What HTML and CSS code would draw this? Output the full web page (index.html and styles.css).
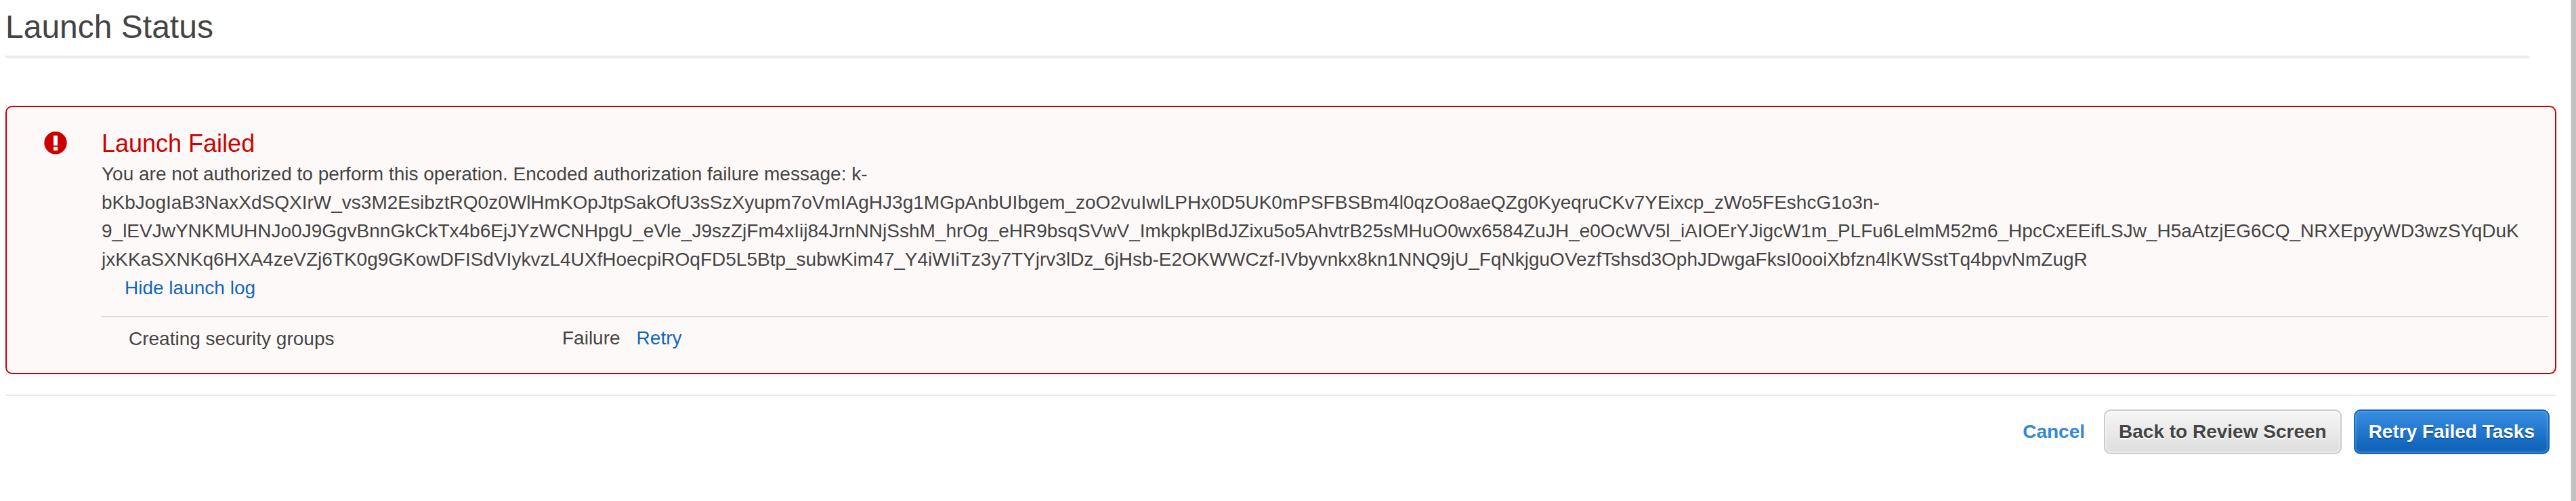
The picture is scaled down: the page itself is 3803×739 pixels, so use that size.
FILE: index.html
```html
<!DOCTYPE html>
<html lang="en">
<head>
<meta charset="utf-8">
<title>Launch Status</title>
<link rel="stylesheet" href="styles.css">
</head>
<body>
<main class="page">
  <h1 class="title">Launch Status</h1>
  <section class="alert">
    <svg class="alert-icon" viewBox="0 0 34 34"><circle cx="17" cy="16.7" r="16.7" fill="#c00"/><path d="M14 6h6v14.4h-6zM14 23h6v5h-6z" fill="#fff"/><path d="M14 21.4h6v.7h-6z" fill="#f09a9a"/></svg>
    <div class="alert-body">
      <h2 class="alert-title">Launch Failed</h2>
      <p class="message">You are not authorized to perform this operation. Encoded authorization failure message: k-<br>bKbJogIaB3NaxXdSQXIrW_vs3M2EsibztRQ0z0WlHmKOpJtpSakOfU3sSzXyupm7oVmIAgHJ3g1MGpAnbUIbgem_zoO2vuIwlLPHx0D5UK0mPSFBSBm4l0qzOo8aeQZg0KyeqruCKv7YEixcp_zWo5FEshcG1o3n-<br>9_lEVJwYNKMUHNJo0J9GgvBnnGkCkTx4b6EjJYzWCNHpgU_eVle_J9szZjFm4xIij84JrnNNjSshM_hrOg_eHR9bsqSVwV_ImkpkplBdJZixu5o5AhvtrB25sMHuO0wx6584ZuJH_e0OcWV5l_iAIOErYJigcW1m_PLFu6LelmM52m6_HpcCxEEifLSJw_H5aAtzjEG6CQ_NRXEpyyWD3wzSYqDuK<br>jxKKaSXNKq6HXA4zeVZj6TK0g9GKowDFISdVIykvzL4UXfHoecpiROqFD5L5Btp_subwKim47_Y4iWIiTz3y7TYjrv3lDz_6jHsb-E2OKWWCzf-IVbyvnkx8kn1NNQ9jU_FqNkjguOVezfTshsd3OphJDwgaFksI0ooiXbfzn4lKWSstTq4bpvNmZugR</p>
      <a class="link toggle">Hide launch log</a>
      <div class="log">
        <span class="task">Creating security groups</span>
        <span class="state">Failure</span>
        <a class="link">Retry</a>
      </div>
    </div>
  </section>
  <footer class="actions">
    <a class="cancel">Cancel</a>
    <button class="btn">Back to Review Screen</button>
    <button class="btn primary">Retry Failed Tasks</button>
  </footer>
</main>
<div class="scrollbar"></div>
</body>
</html>
```
FILE: styles.css
```css
* { box-sizing: border-box; }
body { margin: 0; height: 739px; display: flex; background: #fff; color: #444; font: 28px/42px "Liberation Sans", Arial, sans-serif; overflow: hidden; }
.page { width: 3794px; padding: 0 20px 0 8px; }
.title { margin: 0 40px 70px 0; height: 86px; padding-top: 13px; border-bottom: 4px solid #ebebeb; font-size: 48px; font-weight: 400; line-height: 54px; white-space: nowrap; }
.alert { height: 396px; display: flex; border: 2px solid #c00; border-radius: 10px; background: #fdf9f8; padding: 32px 10px 0 55px; }
.alert-icon { width: 34px; height: 34px; margin-top: 4px; flex: none; }
.alert-body { margin-left: 51px; flex: 1; min-width: 0; }
.alert-title { margin: 0; color: #c00; font-size: 36px; font-weight: 400; line-height: 44px; }
.message { margin: 2px 0 0; white-space: nowrap; }
.link { color: #1166bb; }
.toggle { display: block; padding-left: 34px; }
.log { display: flex; margin-top: 20px; padding: 10px 0 0 40px; border-top: 2px solid #dadcda; }
.task { width: 640px; padding-top: 1px; }
.state { margin-right: 24px; }
.actions { display: flex; justify-content: flex-end; align-items: center; margin-top: 30px; padding: 20px 10px 0 0; border-top: 2px solid #ebebeb; font-weight: 700; }
.cancel { color: #3388dd; margin-right: 28px; }
.btn { height: 66px; padding: 0 20px; border: 2px solid #ccc; border-radius: 10px; background: linear-gradient(#f6f6f6, #ddd); color: #444; font: inherit; text-shadow: 0 2px 0 #fff; box-shadow: inset 0 0 4px #fff; }
.primary { margin-left: 18px; border-color: #1166bb; background: linear-gradient(#3388dd 15%, #1166bb 85%); color: #fff; text-shadow: 0 2px 0 #0d53a0; box-shadow: inset 0 0 4px rgba(255,255,255,.4); }
.scrollbar { width: 9px; border-left: 2px solid #f1f1f1; background: #c1c1c1; }
```
